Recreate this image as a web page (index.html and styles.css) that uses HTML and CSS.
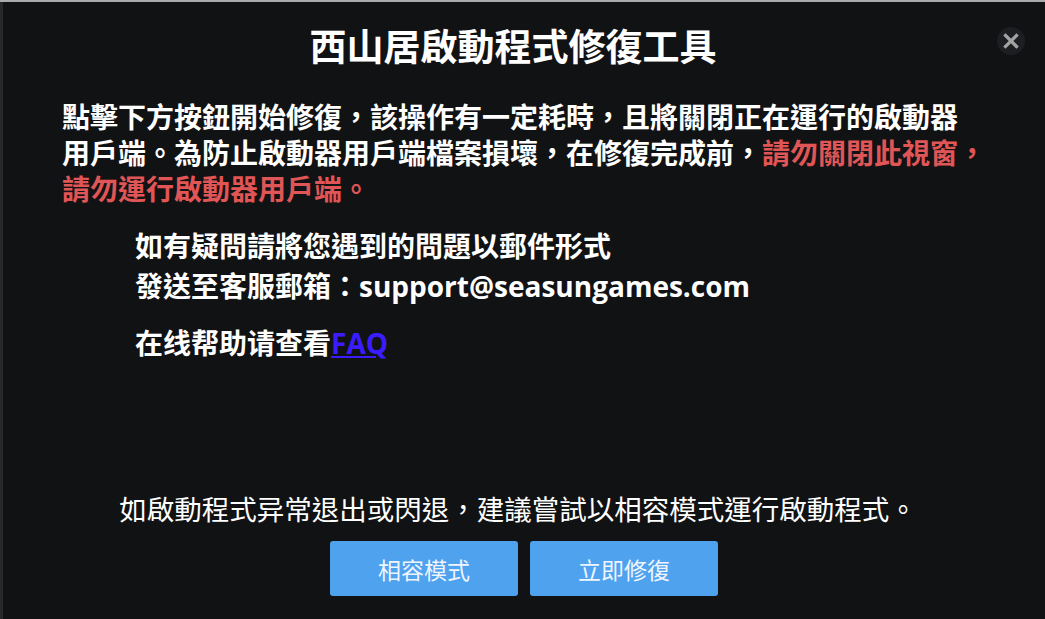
FILE: index.html
```html
<!DOCTYPE html>
<html lang="zh-Hant">
<head>
    <meta charset="UTF-8">
    <meta name="viewport" content="width=device-width, initial-scale=1.0">
    <title>西山居啟動程式修復工具</title>
    <link rel="stylesheet" href="styles.css">
</head>
<body>
    <div class="dialog">
        <div class="header">
            <h1>西山居啟動程式修復工具</h1>
            <button class="close-btn" aria-label="關閉">
                <svg width="16" height="16" viewBox="0 0 16 16">
                    <path d="M2.5 2.5 L13.5 13.5 M13.5 2.5 L2.5 13.5" stroke="#a3a3a3" stroke-width="3.2" stroke-linecap="square"/>
                </svg>
            </button>
        </div>

        <p class="notice">
            點擊下方按鈕開始修復，該操作有一定耗時，且將關閉正在運行的啟動器<br>
            用戶端。為防止啟動器用戶端檔案損壞，在修復完成前，<span class="warn">請勿關閉此視窗，<br>
            請勿運行啟動器用戶端。</span>
        </p>

        <div class="contact">
            <p>如有疑問請將您遇到的問題以郵件形式<br>發送至客服郵箱：support@seasungames.com</p>
            <p class="faq">在线帮助请查看<a href="#">FAQ</a></p>
        </div>

        <div class="bottom">
            <p class="tip">如啟動程式异常退出或閃退，建議嘗試以相容模式運行啟動程式。</p>
            <div class="actions">
                <button class="btn">相容模式</button>
                <button class="btn">立即修復</button>
            </div>
        </div>
    </div>
</body>
</html>
```

FILE: styles.css
```css
* {
    margin: 0;
    padding: 0;
    box-sizing: border-box;
}
html, body {
    height: 100%;
}
body {
    font-family: "Open Sans", "Noto Sans CJK TC", sans-serif;
    background-color: #27282a;
    border-top: 2px solid #ababab;
    overflow: hidden;
}
.dialog {
    margin-left: 3px;
    height: 617px;
    background-color: #111214;
    color: #fff;
    display: flex;
    flex-direction: column;
    padding-top: 18px;
}
.header {
    position: relative;
    text-align: center;
}
h1 {
    padding-right: 22px;
    font-size: 37px;
    line-height: 50px;
    font-weight: 700;
    font-family: "Noto Sans CJK TC", sans-serif;
}
.close-btn {
    position: absolute;
    top: 7px;
    right: 20px;
    width: 28px;
    height: 28px;
    border-radius: 50%;
    border: none;
    background-color: #1d1e21;
    display: flex;
    align-items: center;
    justify-content: center;
    cursor: pointer;
}
.notice {
    margin-top: 28px;
    padding-left: 59px;
    font-size: 28px;
    line-height: 36px;
    font-weight: 700;
    font-family: "Noto Sans CJK TC", sans-serif;
    white-space: nowrap;
}
.warn {
    color: #e05656;
}
.contact {
    margin-top: 20px;
    padding-left: 132px;
    font-size: 28px;
    line-height: 40px;
    font-weight: 700;
}
.faq {
    margin-top: 17px;
}
.faq a {
    color: #3a1cff;
    text-decoration: underline;
}
.bottom {
    margin-top: auto;
    padding-bottom: 23px;
    text-align: center;
}
.tip {
    padding-right: 12px;
    font-size: 27.5px;
    line-height: 36px;
    font-family: "Noto Sans CJK TC", sans-serif;
}
.actions {
    margin-top: 15px;
    display: flex;
    justify-content: center;
    gap: 12px;
}
.btn {
    width: 188px;
    height: 55px;
    background-color: #4fa2ee;
    color: #eef5ff;
    border: none;
    border-radius: 3px;
    font-size: 23px;
    font-family: "Noto Sans CJK TC", sans-serif;
    cursor: pointer;
}
```
